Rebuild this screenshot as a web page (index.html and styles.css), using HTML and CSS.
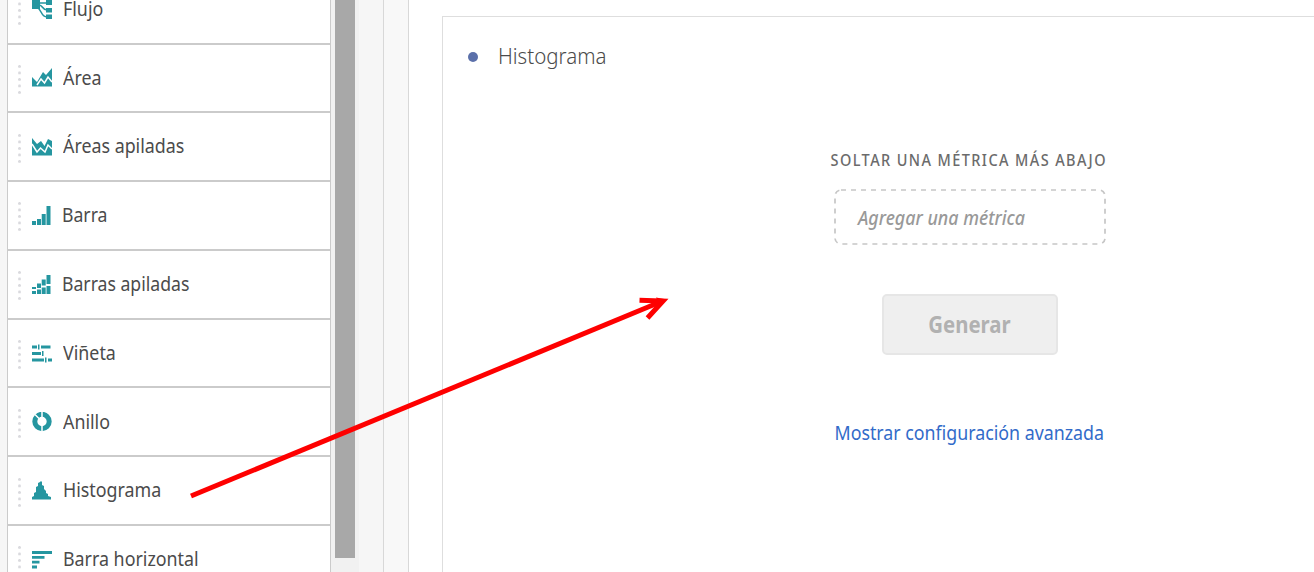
FILE: index.html
```html
<!DOCTYPE html>
<html lang="es">
<head>
<meta charset="utf-8">
<title>Histograma</title>
<link rel="stylesheet" href="styles.css">
</head>
<body>
<div class="app">
  <aside class="sidebar">
    <ul class="list">
      <li class="item"><i class="grip"></i><svg class="icon" viewBox="0 0 20 20"><path d="M0 0h8v9H0zM14 0h6v5h-6zM14 8h6v4.500h-6zM14 14.500h6V19h-6z"/><path class="stroke" d="M7 3h8M7 5c4 0 3 5 8 5M5 7c5 3 4 10 10 10"/></svg><span class="label">Flujo</span></li>
      <li class="item"><i class="grip"></i><svg class="icon" viewBox="0 0 20 20"><path d="M0 9l5 5 6-10 3 3 6-7v18.500H0z"/><path class="gap" d="M5 17l4-6 3.500 4 3.500-6 4 5"/></svg><span class="label">Área</span></li>
      <li class="item"><i class="grip"></i><svg class="icon" viewBox="0 0 20 20"><path d="M0 1l5 6 4-3 3.500 5L16 2l4 2v14.500H0z"/><path class="gap" d="M0 7l5 8 3.500-4 4.500 4 3-7 4 4"/></svg><span class="label">Áreas apiladas</span></li>
      <li class="item"><i class="grip"></i><svg class="icon" viewBox="0 0 20 20"><path d="M0 15h4v4H0zM5 13h4v6H5zM9.700 8h4v11h-4zM14.500 0h4v19h-4z"/></svg><span class="label low">Barra</span></li>
      <li class="item"><i class="grip"></i><svg class="icon" viewBox="0 0 20 20"><path d="M0 12h4v2H0zM0 16h4v3H0zM5 8.500h4V13H5zM5 14.500h4V19H5zM9.700 4.500h4v6h-4zM9.700 12.500h4V19h-4zM14.500 0h4v9h-4zM14.500 11h4v8h-4z"/></svg><span class="label low">Barras apiladas</span></li>
      <li class="item"><i class="grip"></i><svg class="icon" viewBox="0 0 20 20"><path d="M0 1.500h5v3H0zM6 .5h1.500v5H6zM9 1.500h9.500v3H9zM0 8h9v3H0zM10 7h1.500v5H10zM0 14.500h12v3H0zM13 13.500h1.500v5H13zM16 14.500h4v3h-4z"/></svg><span class="label">Viñeta</span></li>
      <li class="item"><i class="grip"></i><svg class="icon" viewBox="0 0 20 20"><circle class="ring" cx="10" cy="9.500" r="7.200"/><path class="gap" d="M10 0v6M10 13v7M3 2.500l5 5"/></svg><span class="label">Anillo</span></li>
      <li class="item"><i class="grip"></i><svg class="icon" viewBox="0 0 20 20"><path d="M0 18.500V16l2-1v-3l2-1V6l2-1V2l2-1 1-1 1 1v3l2 1v3l2 2v2l2 1v2l3 1v2.500z"/></svg><span class="label">Histograma</span></li>
      <li class="item"><i class="grip"></i><svg class="icon" viewBox="0 0 20 20"><path d="M0 1h20v3H0zM0 6h12.500v2.700H0zM0 10.800h7.500v2.700H0zM0 15.600h5v2.900H0z"/></svg><span class="label">Barra horizontal</span></li>
    </ul>
    <div class="scroll"><div class="thumb"></div></div>
  </aside>
  <div class="gutter"></div>
  <main class="canvas">
    <section class="panel">
      <header class="head"><i class="dot"></i><h1 class="title"><span class="fit title-fit">Histograma</span></h1></header>
      <div class="form">
        <div class="caption"><span class="fit caption-fit">SOLTAR UNA MÉTRICA MÁS ABAJO</span></div>
        <div class="drop"><svg class="outline" viewBox="0 0 272 56"><rect x="1" y="1" width="270" height="54" rx="6"/></svg><span class="fit drop-fit">Agregar una métrica</span></div>
        <button class="button" disabled><span class="fit button-fit">Generar</span></button>
        <a class="link"><span class="fit link-fit">Mostrar configuración avanzada</span></a>
      </div>
    </section>
  </main>
</div>
<svg class="arrow" viewBox="0 0 1314 572"><path d="M191 496L659 302.500"/><path d="M639.500 300.200L663 301L647.500 318"/><path class="tip" d="M656 297.500L667 299.500L660 306z"/></svg>
</body>
</html>
```
FILE: styles.css
```css
* { box-sizing: border-box; }
body { margin: 0; background: #fff; font-family: "Noto Sans", sans-serif; color: #4b4b4b; }
.app { display: flex; height: 572px; overflow: hidden; }
.sidebar { width: 383px; display: flex; background: #f6f6f6; padding-left: 7px; flex: none; }
.list { list-style: none; margin: -24.300px 0 0; padding: 0; width: 324px; height: 640px; background: #fff; border: solid #cbcbcb; border-width: 0 1.5px; flex: none; }
.item { height: 68.8px; border-bottom: 2px solid #cbcbcb; display: flex; align-items: center; padding-left: 10px; }
.grip { width: 3px; height: 30px; background: radial-gradient(circle at 1.5px 1.5px, #dadade 1.1px, transparent 1.7px) 0 0 / 3px 6.5px; margin-top: 4px; }
.icon { width: 20px; height: 20px; margin: 1px 0 0 11px; fill: #2596a0; flex: none; }
.stroke { fill: none; stroke: #2596a0; stroke-width: 1.6; }
.gap { fill: none; stroke: #fff; stroke-width: 1.5; }
.ring { fill: none; stroke: #2596a0; stroke-width: 5; }
.label { font-size: 20.500px; line-height: 28px; margin: -2.500px 0 0 11px; white-space: nowrap; transform: scaleX(.87); transform-origin: 0 50%; }
.low { margin-left: 9.500px; transform: scaleX(.86); }
.scroll { width: 28px; background: #f1f1f1; padding-left: 4px; }
.thumb { width: 20px; height: 558px; background: #a8a8a8; }
.gutter { width: 26px; background: #f8f8f8; border: solid #d8d8d8; border-width: 0 1.5px; flex: none; }
.canvas { flex: 1; padding: 16px 0 0 33px; }
.panel { height: 570px; border: solid #dedede; border-width: 1.5px 0 0 1.5px; }
.head { display: flex; align-items: center; height: 28px; margin: 25px 0 0 25px; }
.dot { width: 10px; height: 10px; margin-top: 1px; border-radius: 50%; background: #5b70aa; }
.title { margin: 0 0 0 19.500px; font-size: 22.500px; line-height: 28px; font-weight: 300; }
.fit { display: inline-block; white-space: nowrap; transform-origin: 50% 50%; }
.title-fit { transform: scaleX(.91); transform-origin: 0 50%; }
.form { width: 300px; margin: 80px 0 0 377px; display: flex; flex-direction: column; align-items: center; }
.caption { font-size: 15.500px; line-height: 20px; font-weight: 500; letter-spacing: 1.5px; color: #6b6b6b; }
.caption-fit { transform: translateX(-1px) scaleX(.935); }
.drop { width: 272px; height: 56px; margin-top: 19px; padding-left: 24px; display: flex; align-items: center; position: relative; color: #999; font-size: 20.500px; font-style: italic; font-weight: 500; }
.outline { position: absolute; inset: 0; fill: none; stroke: #c6c6c6; stroke-width: 1.7; stroke-dasharray: 5 5; }
.drop-fit { transform: scaleX(.87); transform-origin: 0 50%; }
.button { width: 176px; height: 61px; margin-top: 49px; padding: 0; border: 2px solid #e6e6e6; border-radius: 5px; background: #efefef; color: #b1b1b1; font: bold 22.500px "Noto Sans", sans-serif; }
.button-fit { transform: translateX(-1px) scaleX(.905); }
.link { margin-top: 63px; font-size: 20.500px; line-height: 28px; color: #326bc9; }
.link-fit { transform: translateX(-1px) scaleX(.868); }
.arrow { position: absolute; inset: 0; width: 1314px; height: 572px; fill: none; stroke: #fe0000; stroke-width: 5; pointer-events: none; }
.tip { fill: #fe0000; stroke: none; }
```
